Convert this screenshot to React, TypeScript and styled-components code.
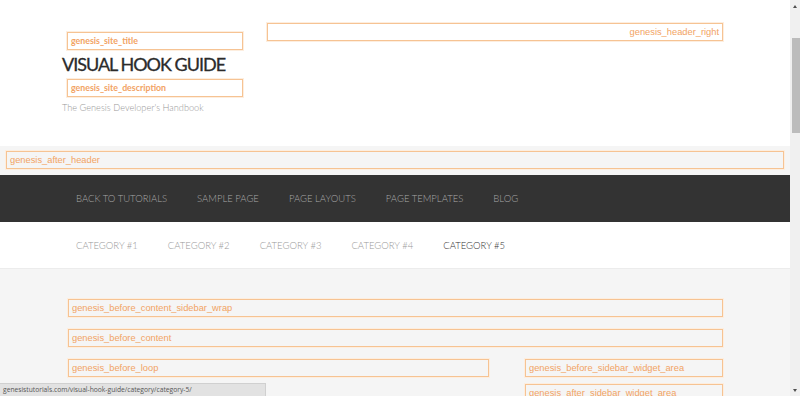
import React from "react";
import styled, { createGlobalStyle } from "styled-components";

const Global = createGlobalStyle`
  html, body { margin: 0; padding: 0; background: #fff; overflow: hidden; }
  body { font-family: Lato, "Open Sans", sans-serif; }
`;

const Shell = styled.div`
  display: flex;
  width: 800px;
  height: 396px;
  overflow: hidden;
`;

const Page = styled.div`
  flex: 1;
  min-width: 0;
  display: flex;
  flex-direction: column;
  overflow: hidden;
  & > * { flex-shrink: 0; }
`;

const Scrollbar = styled.div`
  width: 10px;
  flex-shrink: 0;
  background: #f0f0f0;
  display: flex;
  flex-direction: column;
  align-items: center;
`;

const Arrow = styled.div<{ $down?: boolean }>`
  width: 0;
  height: 0;
  border-left: 2px solid transparent;
  border-right: 2px solid transparent;
  ${(p) => (p.$down ? "border-top: 3px solid #505050;" : "border-bottom: 3px solid #505050;")}
  margin-top: ${(p) => (p.$down ? "auto" : "5px")};
  margin-bottom: ${(p) => (p.$down ? "4px" : "0")};
`;

const Thumb = styled.div`
  width: 8px;
  height: 95px;
  margin-top: 30px;
  margin-left: 2px;
  background: #bcbcbc;
`;

const Header = styled.header`
  height: 146px;
  background: #fff;
  display: flex;
  padding-left: 62px;
  box-sizing: border-box;
`;

const TitleArea = styled.div`
  width: 181px;
  display: flex;
  flex-direction: column;
  padding-top: 32px;
`;

const HookBox = styled.div<{ $bold?: boolean; $right?: boolean }>`
  box-sizing: border-box;
  height: 18px;
  border: 1px solid #f6c393;
  box-shadow: 0 0 0 1px #fdeedf;
  color: #f2a364;
  font-family: ${(p) => (p.$bold ? 'Lato, "Open Sans", sans-serif' : '"Liberation Sans", Arial, sans-serif')};
  font-weight: ${(p) => (p.$bold ? 700 : 400)};
  font-size: ${(p) => (p.$bold ? "8.8px" : "9.3px")};
  line-height: 16px;
  padding: 0 3px;
  white-space: nowrap;
  overflow: hidden;
  text-align: ${(p) => (p.$right ? "right" : "left")};
`;

const TitleBox = styled(HookBox)`
  margin-left: 5px;
  width: 176px;
`;

const SiteTitle = styled.h1`
  margin: 5px 0 5px 0;
  font-family: Lato, sans-serif;
  font-weight: 400;
  font-size: 18px;
  line-height: 19px;
  color: #2b2b2b;
  letter-spacing: -1px;
  -webkit-text-stroke: 0.3px #2b2b2b;
  white-space: nowrap;
`;

const SiteDesc = styled.p`
  margin: 4px 0 0 0;
  font-family: Lato, sans-serif;
  font-weight: 300;
  font-size: 9.2px;
  color: #999;
  line-height: 13px;
  white-space: nowrap;
`;

const HeaderRight = styled.div`
  margin-left: 24px;
  padding-top: 23px;
  width: 456px;
`;

const AfterHeader = styled.div`
  background: #f5f5f5;
  height: 29px;
  padding: 5px 6px 0 6px;
  box-sizing: border-box;
`;

const NavBar = styled.nav<{ $dark?: boolean }>`
  height: 47px;
  box-sizing: border-box;
  background: ${(p) => (p.$dark ? "#333" : "#fff")};
  border-bottom: ${(p) => (p.$dark ? "none" : "1px solid #ececec")};
  display: flex;
  align-items: center;
  padding-left: 61px;
`;

const NavItem = styled.a<{ $active?: boolean; $dark?: boolean }>`
  padding: 0 15px;
  font-family: Lato, sans-serif;
  font-weight: 300;
  font-size: 9.5px;
  text-transform: uppercase;
  text-decoration: none;
  white-space: nowrap;
  color: ${(p) => (p.$active ? "#333" : p.$dark ? "#a8a8a8" : "#999")};
`;

const Content = styled.main`
  flex: 1;
  background: #f5f5f5;
  padding: 30px 0 0 68px;
  display: flex;
  flex-direction: column;
  gap: 12px;
`;

const WideBox = styled(HookBox)`
  width: 655px;
`;

const Columns = styled.div`
  display: flex;
  gap: 36px;
  width: 655px;
`;

const Column = styled.div<{ $w: number }>`
  width: ${(p) => p.$w}px;
  display: flex;
  flex-direction: column;
  gap: 7px;
`;

const StatusBar = styled.div`
  position: fixed;
  left: 0;
  bottom: 0;
  width: 266px;
  height: 13px;
  box-sizing: border-box;
  background: #e2e2e2;
  border-top: 1px solid #d0d0d0;
  border-right: 1px solid #d0d0d0;
  font-family: "Open Sans", "Liberation Sans", sans-serif;
  font-size: 6.7px;
  line-height: 12px;
  color: #555;
  padding-left: 3px;
  white-space: nowrap;
`;

const primary = ["Back to Tutorials", "Sample Page", "Page Layouts", "Page Templates", "Blog"];
const secondary = ["Category #1", "Category #2", "Category #3", "Category #4", "Category #5"];

export default function App() {
  return (
    <>
      <Global />
      <Shell>
        <Page>
          <Header>
            <TitleArea>
              <TitleBox $bold>genesis_site_title</TitleBox>
              <SiteTitle>VISUAL HOOK GUIDE</SiteTitle>
              <TitleBox $bold>genesis_site_description</TitleBox>
              <SiteDesc>The Genesis Developer's Handbook</SiteDesc>
            </TitleArea>
            <HeaderRight>
              <HookBox $right>genesis_header_right</HookBox>
            </HeaderRight>
          </Header>
          <AfterHeader>
            <HookBox>genesis_after_header</HookBox>
          </AfterHeader>
          <NavBar $dark>
            {primary.map((t) => (
              <NavItem key={t} $dark>
                {t}
              </NavItem>
            ))}
          </NavBar>
          <NavBar>
            {secondary.map((t, i) => (
              <NavItem key={t} $active={i === 4}>
                {t}
              </NavItem>
            ))}
          </NavBar>
          <Content>
            <WideBox>genesis_before_content_sidebar_wrap</WideBox>
            <WideBox>genesis_before_content</WideBox>
            <Columns>
              <Column $w={421}>
                <HookBox>genesis_before_loop</HookBox>
              </Column>
              <Column $w={198}>
                <HookBox>genesis_before_sidebar_widget_area</HookBox>
                <HookBox>genesis_after_sidebar_widget_area</HookBox>
              </Column>
            </Columns>
          </Content>
        </Page>
        <Scrollbar>
          <Arrow />
          <Thumb />
          <Arrow $down />
        </Scrollbar>
      </Shell>
      <StatusBar>genesistutorials.com/visual-hook-guide/category/category-5/</StatusBar>
    </>
  );
}
